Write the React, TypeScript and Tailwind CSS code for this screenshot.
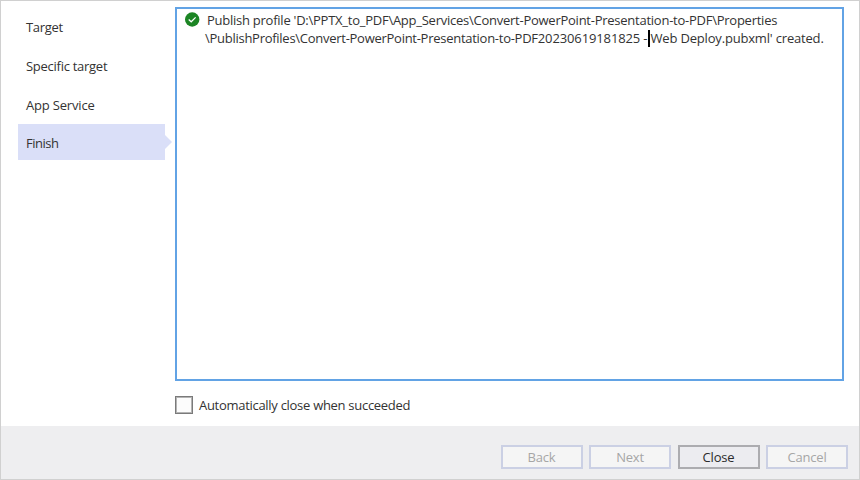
const steps = [
  { label: 'Target', tracking: 'tracking-[-0.3px]' },
  { label: 'Specific target', tracking: 'tracking-[-0.27px]' },
  { label: 'App Service', tracking: 'tracking-[-0.18px]' },
  { label: 'Finish', tracking: 'tracking-[-0.5px]', active: true },
];

const buttons = [
  { label: 'Back', style: 'border-[#cbd0e4] bg-[#f5f5f5] text-[#a6a6a6]', disabled: true },
  { label: 'Next', style: 'border-[#cbd0e4] bg-[#f5f5f5] text-[#a6a6a6]', disabled: true },
  { label: 'Close', style: 'border-[#acacb0] bg-[#ececf0] text-[#2b2b2b]', disabled: false },
  { label: 'Cancel', style: 'border-[#cbd0e4] bg-[#f5f5f5] text-[#a6a6a6]', disabled: true },
];

function SuccessIcon() {
  return (
    <svg className="mt-[1px] h-[15px] w-[15px] shrink-0" viewBox="0 0 15 15" fill="none">
      <circle cx="7.2" cy="7.5" r="7.2" fill="#1c8524" />
      <path d="M3.7 7.5 6.2 9.8 10.6 5.4" stroke="#fff" strokeWidth="1.25" />
    </svg>
  );
}

export default function App() {
  return (
    <div className="flex h-[480px] w-[860px] flex-col border border-[#d0d0d0] bg-white font-['Open_Sans','Noto_Sans',sans-serif] text-[13px] text-[#333333]">
      <main className="flex h-[425px] shrink-0">
        <nav className="flex w-[174px] shrink-0 flex-col gap-[3px] pl-[17px] pt-[7px]">
          {steps.map((step) => (
            <div
              key={step.label}
              className={`flex h-9 items-center ${step.active ? 'mt-[-1px]' : ''}`}
            >
              <div
                className={`flex h-full w-[147px] items-center pl-2 pt-[4px] ${step.active ? 'bg-[#dadff8]' : ''}`}
              >
                <span className={`whitespace-nowrap ${step.tracking}`}>{step.label}</span>
              </div>
              {step.active && (
                <svg className="h-[14px] w-[7px]" viewBox="0 0 7 14">
                  <path d="M0 0 7 7 0 14Z" fill="#dadff8" />
                </svg>
              )}
            </div>
          ))}
        </nav>
        <div className="flex flex-col pt-[6px]">
          <section className="flex h-[374px] w-[669px] border-2 border-[#62a3e5] pl-[8px] pt-[2px]">
            <SuccessIcon />
            <div className="relative whitespace-nowrap pl-[5px] leading-[18px] tracking-[-0.25px]">
              <p className="pl-[2px]">
                Publish profile 'D:\PPTX_to_PDF\App_Services\Convert-PowerPoint-Presentation-to-PDF\Properties
              </p>
              <p>
                <span className="tracking-[-0.27px]">
                  \PublishProfiles\Convert-PowerPoint-Presentation-to-PDF
                </span>
                <span className="tracking-[-0.12px]">20230619181825</span>
                <span className="tracking-[-0.18px]">{" - Web Deploy.pubxml' created."}</span>
              </p>
              <span className="absolute left-[448px] top-[19px] h-[17px] w-[2px] bg-black" />
            </div>
          </section>
          <label className="mt-[15px] flex h-[18px] items-center gap-[6px]">
            <span className="h-[18px] w-[18px] border border-[#7a7a7a] bg-[#fcfcfc] shadow-[inset_0_0_0_1px_#b4b4b4]" />
            <span className="whitespace-nowrap pt-[2px] tracking-[-0.29px]">Automatically close when succeeded</span>
          </label>
        </div>
      </main>
      <footer className="flex flex-1 justify-end gap-[6.5px] bg-[#eeeef0] pr-[11px] pt-[19px]">
        {buttons.map((button) => (
          <button
            key={button.label}
            disabled={button.disabled}
            className={`flex h-6 w-[82px] items-center justify-center border-2 pt-[2px] tracking-[-0.2px] ${button.style}`}
          >
            {button.label}
          </button>
        ))}
      </footer>
    </div>
  );
}
